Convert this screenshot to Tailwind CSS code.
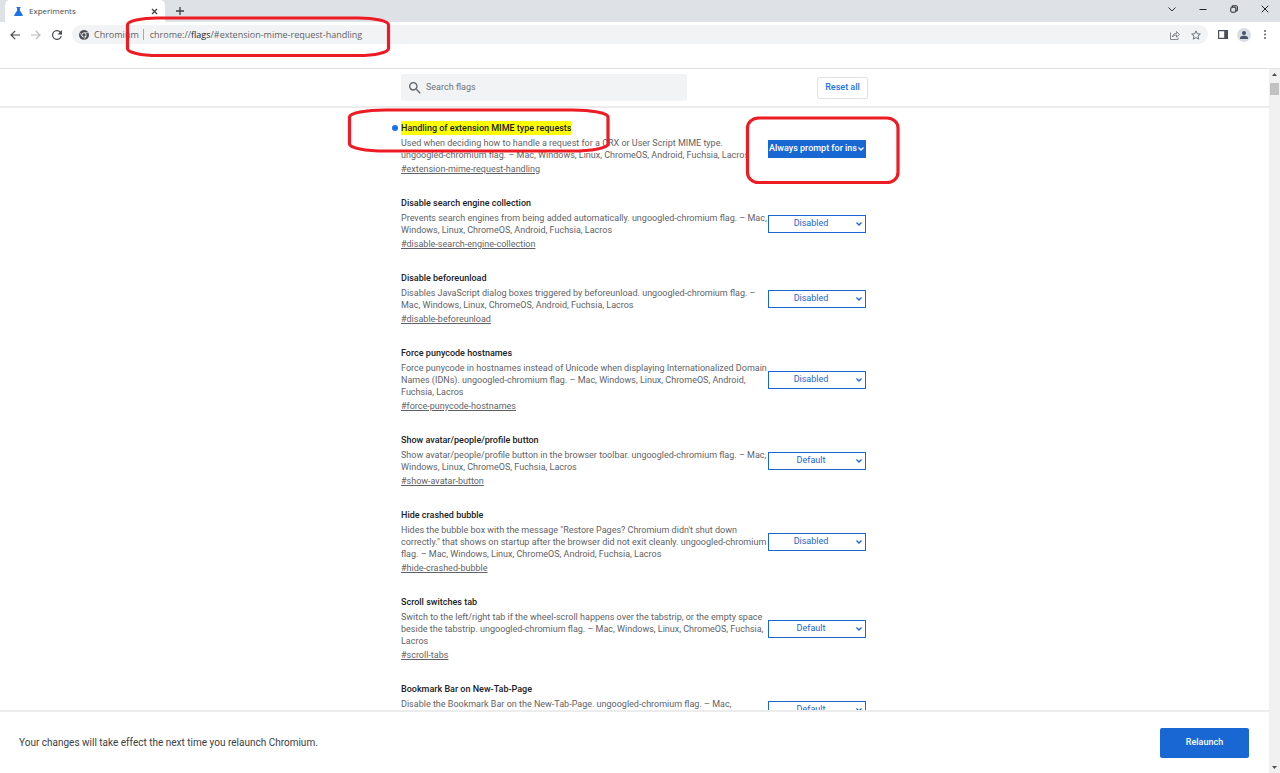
<!DOCTYPE html>
<html lang="en">

<head>
    <meta charset="UTF-8">
    <meta name="viewport" content="width=device-width,initial-scale=1.0">
    <script src="https://cdn.jsdelivr.net/npm/@tailwindcss/browser@4"></script>
    <title>Experiments</title>
</head>

<body class="relative flex flex-col h-screen overflow-hidden bg-white font-['Roboto',sans-serif] text-[9px] text-[#5f6368]">

    <!-- Tab strip -->
    <header class="shrink-0 font-['Open_Sans',sans-serif]">
        <div class="flex items-end justify-between h-[22px] bg-[#dee1e6]">
            <div class="flex items-center h-full pl-[5px]">
                <div class="flex items-center w-40 h-full pl-[9px] pr-[7px] bg-white rounded-t-[5px]">
                    <svg class="w-[9px] h-[9px] shrink-0" viewBox="0 0 18 18" fill="#1a73e8">
                        <path d="M5 0h8v2h-1.200v5L17.500 16c.6 1-.1 2-1.200 2H1.700C.6 18-.1 17 .5 16L6.200 7V2H5z" />
                    </svg>
                    <span class="flex-1 ml-1.5 text-[8px] text-[#45494d]">Experiments</span>
                    <button type="button" aria-label="Close tab">
                        <svg class="w-[7px] h-[7px]" viewBox="0 0 7 7" fill="none" stroke="#3c4043" stroke-width="1.200">
                            <path d="M1 1l5 5M6 1l-5 5" />
                        </svg>
                    </button>
                </div>
                <button type="button" class="ml-[11px]" aria-label="New tab">
                    <svg class="w-2 h-2" viewBox="0 0 8 8" fill="none" stroke="#3c4043" stroke-width="1.300">
                        <path d="M4 0v8M0 4h8" />
                    </svg>
                </button>
            </div>
            <div class="flex items-center gap-[23px] h-[18px] pr-[11px] mb-1">
                <button type="button" aria-label="Search tabs">
                    <svg class="w-2 h-2" viewBox="0 0 8 8" fill="none" stroke="#333" stroke-width="1">
                        <path d="M.5 2.500L4 6l3.500-3.500" />
                    </svg>
                </button>
                <button type="button" aria-label="Minimize">
                    <svg class="w-2 h-2" viewBox="0 0 8 8" fill="none" stroke="#222" stroke-width="1">
                        <path d="M.5 4.500h7" />
                    </svg>
                </button>
                <button type="button" aria-label="Restore">
                    <svg class="w-2 h-2" viewBox="0 0 8 8" fill="none" stroke="#222" stroke-width="1">
                        <rect x=".8" y="2.200" width="5" height="5" rx=".8" />
                        <path d="M2.300 2V.8h4.200q.8 0 .8.8v4.100H6" />
                    </svg>
                </button>
                <button type="button" aria-label="Close">
                    <svg class="w-2 h-2" viewBox="0 0 8 8" fill="none" stroke="#222" stroke-width="1">
                        <path d="M.7.7l6.600 6.600M7.300.7L.7 7.300" />
                    </svg>
                </button>
            </div>
        </div>

        <!-- Toolbar -->
        <div class="flex items-center h-[25px] pl-2.5 pr-[13px]">
            <div class="flex items-center gap-[11px] w-[62px]">
                <button type="button" aria-label="Back">
                    <svg class="w-2.5 h-2.5" viewBox="0 0 10 10" fill="none" stroke="#46494d" stroke-width="1.200">
                        <path d="M10 5H1.200M5.200.8L1 5l4.200 4.200" />
                    </svg>
                </button>
                <button type="button" aria-label="Forward">
                    <svg class="w-2.5 h-2.5" viewBox="0 0 10 10" fill="none" stroke="#babcbe" stroke-width="1.200">
                        <path d="M0 5h8.800M4.800.8L9 5 4.800 9.200" />
                    </svg>
                </button>
                <button type="button" aria-label="Reload">
                    <svg class="w-2.5 h-2.5" viewBox="0 0 16 16" fill="#46494d">
                        <path d="M13.650 2.350A8 8 0 1 0 15.730 10h-2.080A6 6 0 1 1 8 2c1.660 0 3.140.69 4.220 1.780L9 7h7V0z" />
                    </svg>
                </button>
            </div>
            <div class="flex items-center flex-1 h-[19px] pl-[7px] pr-[7px] bg-[#f1f3f4] rounded-full">
                <svg class="w-2.5 h-2.5 shrink-0" viewBox="0 0 24 24" fill="none">
                    <circle cx="12" cy="12" r="12" fill="#4b4f54" />
                    <circle cx="12" cy="12" r="6" fill="#f1f3f4" />
                    <circle cx="12" cy="12" r="4" fill="#4b4f54" />
                    <path d="M12 6.200h10.500M7 15L1.800 6M17 15l-5.200 9" stroke="#f1f3f4" stroke-width="1.500" />
                </svg>
                <span class="ml-[5px]">Chromium</span>
                <span class="w-px h-[11px] ml-1 bg-[#a5a9ad]"></span>
                <span class="flex-1 ml-1.5">chrome://<span class="text-[#202124]">flags</span>/#extension-mime-request-handling</span>
                <button type="button" aria-label="Share">
                    <svg class="w-2.5 h-2.5" viewBox="0 0 20 20" fill="none" stroke="#6b6f73" stroke-width="1.600">
                        <path d="M1 5v14h15v-4M5 14c.5-5 3-7 8-7V3l6 6-6 5v-4c-4 0-6.500 1-8 4z" />
                    </svg>
                </button>
                <button type="button" class="ml-[11px]" aria-label="Bookmark this tab">
                    <svg class="w-2.5 h-2.5" viewBox="0 0 20 20" fill="none" stroke="#5f6368" stroke-width="1.800">
                        <path d="M10 1.800l2.500 5.700 6.200.6-4.700 4.100 1.400 6.100L10 15.100l-5.400 3.200L6 12.200 1.300 8.100l6.200-.6z" />
                    </svg>
                </button>
            </div>
            <button type="button" class="ml-2.5" aria-label="Side panel">
                <svg class="w-2.5 h-[9px]" viewBox="0 0 10 9">
                    <path fill="#4b5058" fill-rule="evenodd" d="M0 0h10v9H0zM1.200 1.200v6.600h5V1.200z" />
                </svg>
            </button>
            <button type="button" class="flex items-center justify-center w-3.5 h-3.5 ml-[9px] bg-[#dadde3] rounded-full" aria-label="Profile">
                <svg class="w-2 h-2" viewBox="0 0 8 8" fill="#46536b">
                    <circle cx="4" cy="2" r="2" />
                    <path d="M0 8V6.800C0 5.300 2.600 4.800 4 4.800s4 .5 4 2V8z" />
                </svg>
            </button>
            <button type="button" class="ml-3" aria-label="Menu">
                <svg class="w-1 h-[9px]" viewBox="0 0 4 9" fill="#5f6368">
                    <circle cx="2" cy="1" r="1" />
                    <circle cx="2" cy="4.500" r="1" />
                    <circle cx="2" cy="8" r="1" />
                </svg>
            </button>
        </div>
        <!-- Empty bookmarks bar -->
        <div class="h-[22px] border-b border-[#dfe1e3]"></div>
    </header>

    <div class="flex flex-1 min-h-0">
        <div class="flex flex-col flex-1 min-w-0">

            <!-- Search -->
            <div class="shrink-0 h-[39px] border-b-2 border-[#ececec]">
                <div class="flex items-center justify-between w-full max-w-[467px] h-full mx-auto">
                    <label for="search" class="flex items-center w-[286px] h-[27px] px-2 bg-[#f1f3f4] rounded-xs">
                        <svg class="w-3 h-3 shrink-0" viewBox="3 3 18 18" fill="#5f6368">
                            <path d="M15.500 14h-.79l-.28-.27A6.471 6.471 0 0 0 16 9.500 6.500 6.500 0 1 0 9.500 16c1.610 0 3.090-.59 4.230-1.570l.27.28v.79l5 4.990L20.490 19l-4.990-5zm-6 0C7.010 14 5 11.990 5 9.500S7.010 5 9.500 5 14 7.010 14 9.500 11.990 14 9.500 14z" />
                        </svg>
                        <input type="text" id="search" placeholder="Search flags" aria-label="Search flags"
                            class="flex-1 ml-[5px] text-[9px] outline-none placeholder:text-[#6f7377]">
                    </label>
                    <button type="button" class="w-[51px] h-[22px] border border-[#dfe1e5] rounded-xs font-medium text-[#1a73e8]">Reset all</button>
                </div>
            </div>

            <!-- Flags -->
            <main class="flex-1 min-h-0 overflow-hidden">
                <div class="w-full max-w-[467px] mx-auto pt-[13px] pr-0.5">

                    <div class="flex items-center mb-5">
                        <div class="flex-1 min-w-0">
                            <h2 class="relative leading-[14px] font-medium text-[#202124]">
                                <span class="absolute -left-[9px] top-1 w-1.5 h-1.5 bg-[#1a73e8] rounded-full"></span>
                                <label for="flag1" class="inline-block bg-[#ffff00]">Handling of extension MIME type requests</label>
                            </h2>
                            <p class="mt-0.5 leading-3 whitespace-nowrap">Used when deciding how to handle a request for a CRX or User Script MIME type.<br>
                                ungoogled-chromium flag. – Mac, Windows, Linux, ChromeOS, Android, Fuchsia, Lacros</p>
                            <a href="#extension-mime-request-handling" class="block mt-0.5 leading-[13px] underline">#extension-mime-request-handling</a>
                        </div>
                        <div class="relative w-[98px] h-[18px]">
                            <select id="flag1" class="block w-full h-full pr-2 appearance-none border border-[#1967d2] bg-[#1967d2] text-[9px] font-medium text-white">
                                <option>Always prompt for install</option>
                            </select>
                            <svg class="absolute right-0.5 top-[7px] w-1.5 h-1" viewBox="0 0 6 4" fill="none" stroke="#fff" stroke-width="1.300">
                                <path d="M.5.5L3 3 5.500.5" />
                            </svg>
                        </div>
                    </div>

                    <div class="flex items-center mb-5">
                        <div class="flex-1 min-w-0">
                            <h2 class="leading-[14px] font-medium text-[#202124]"><label for="flag2">Disable search engine collection</label></h2>
                            <p class="mt-0.5 leading-3 whitespace-nowrap">Prevents search engines from being added automatically. ungoogled-chromium flag. – Mac,<br>
                                Windows, Linux, ChromeOS, Android, Fuchsia, Lacros</p>
                            <a href="#disable-search-engine-collection" class="block mt-0.5 leading-[13px] underline">#disable-search-engine-collection</a>
                        </div>
                        <div class="relative w-[98px] h-[18px]">
                            <select id="flag2" class="block w-full h-full pr-3 appearance-none border border-[#1967d2] bg-white text-center text-[9px] text-[#1967d2]">
                                <option>Disabled</option>
                            </select>
                            <svg class="absolute right-1 top-[7px] w-1.5 h-1" viewBox="0 0 6 4" fill="none" stroke="#1967d2" stroke-width="1.300">
                                <path d="M.5.5L3 3 5.500.5" />
                            </svg>
                        </div>
                    </div>

                    <div class="flex items-center mb-5">
                        <div class="flex-1 min-w-0">
                            <h2 class="leading-[14px] font-medium text-[#202124]"><label for="flag3">Disable beforeunload</label></h2>
                            <p class="mt-0.5 leading-3 whitespace-nowrap">Disables JavaScript dialog boxes triggered by beforeunload. ungoogled-chromium flag. –<br>
                                Mac, Windows, Linux, ChromeOS, Android, Fuchsia, Lacros</p>
                            <a href="#disable-beforeunload" class="block mt-0.5 leading-[13px] underline">#disable-beforeunload</a>
                        </div>
                        <div class="relative w-[98px] h-[18px]">
                            <select id="flag3" class="block w-full h-full pr-3 appearance-none border border-[#1967d2] bg-white text-center text-[9px] text-[#1967d2]">
                                <option>Disabled</option>
                            </select>
                            <svg class="absolute right-1 top-[7px] w-1.5 h-1" viewBox="0 0 6 4" fill="none" stroke="#1967d2" stroke-width="1.300">
                                <path d="M.5.5L3 3 5.500.5" />
                            </svg>
                        </div>
                    </div>

                    <div class="flex items-center mb-5">
                        <div class="flex-1 min-w-0">
                            <h2 class="leading-[14px] font-medium text-[#202124]"><label for="flag4">Force punycode hostnames</label></h2>
                            <p class="mt-0.5 leading-3 whitespace-nowrap">Force punycode in hostnames instead of Unicode when displaying Internationalized Domain<br>
                                Names (IDNs). ungoogled-chromium flag. – Mac, Windows, Linux, ChromeOS, Android,<br>
                                Fuchsia, Lacros</p>
                            <a href="#force-punycode-hostnames" class="block mt-0.5 leading-[13px] underline">#force-punycode-hostnames</a>
                        </div>
                        <div class="relative w-[98px] h-[18px]">
                            <select id="flag4" class="block w-full h-full pr-3 appearance-none border border-[#1967d2] bg-white text-center text-[9px] text-[#1967d2]">
                                <option>Disabled</option>
                            </select>
                            <svg class="absolute right-1 top-[7px] w-1.5 h-1" viewBox="0 0 6 4" fill="none" stroke="#1967d2" stroke-width="1.300">
                                <path d="M.5.5L3 3 5.500.5" />
                            </svg>
                        </div>
                    </div>

                    <div class="flex items-center mb-5">
                        <div class="flex-1 min-w-0">
                            <h2 class="leading-[14px] font-medium text-[#202124]"><label for="flag5">Show avatar/people/profile button</label></h2>
                            <p class="mt-0.5 leading-3 whitespace-nowrap">Show avatar/people/profile button in the browser toolbar. ungoogled-chromium flag. – Mac,<br>
                                Windows, Linux, ChromeOS, Fuchsia, Lacros</p>
                            <a href="#show-avatar-button" class="block mt-0.5 leading-[13px] underline">#show-avatar-button</a>
                        </div>
                        <div class="relative w-[98px] h-[18px]">
                            <select id="flag5" class="block w-full h-full pr-3 appearance-none border border-[#1967d2] bg-white text-center text-[9px] text-[#1967d2]">
                                <option>Default</option>
                            </select>
                            <svg class="absolute right-1 top-[7px] w-1.5 h-1" viewBox="0 0 6 4" fill="none" stroke="#1967d2" stroke-width="1.300">
                                <path d="M.5.5L3 3 5.500.5" />
                            </svg>
                        </div>
                    </div>

                    <div class="flex items-center mb-5">
                        <div class="flex-1 min-w-0">
                            <h2 class="leading-[14px] font-medium text-[#202124]"><label for="flag6">Hide crashed bubble</label></h2>
                            <p class="mt-0.5 leading-3 whitespace-nowrap">Hides the bubble box with the message "Restore Pages? Chromium didn't shut down<br>
                                correctly." that shows on startup after the browser did not exit cleanly. ungoogled-chromium<br>
                                flag. – Mac, Windows, Linux, ChromeOS, Android, Fuchsia, Lacros</p>
                            <a href="#hide-crashed-bubble" class="block mt-0.5 leading-[13px] underline">#hide-crashed-bubble</a>
                        </div>
                        <div class="relative w-[98px] h-[18px]">
                            <select id="flag6" class="block w-full h-full pr-3 appearance-none border border-[#1967d2] bg-white text-center text-[9px] text-[#1967d2]">
                                <option>Disabled</option>
                            </select>
                            <svg class="absolute right-1 top-[7px] w-1.5 h-1" viewBox="0 0 6 4" fill="none" stroke="#1967d2" stroke-width="1.300">
                                <path d="M.5.5L3 3 5.500.5" />
                            </svg>
                        </div>
                    </div>

                    <div class="flex items-center mb-5">
                        <div class="flex-1 min-w-0">
                            <h2 class="leading-[14px] font-medium text-[#202124]"><label for="flag7">Scroll switches tab</label></h2>
                            <p class="mt-0.5 leading-3 whitespace-nowrap">Switch to the left/right tab if the wheel-scroll happens over the tabstrip, or the empty space<br>
                                beside the tabstrip. ungoogled-chromium flag. – Mac, Windows, Linux, ChromeOS, Fuchsia,<br>
                                Lacros</p>
                            <a href="#scroll-tabs" class="block mt-0.5 leading-[13px] underline">#scroll-tabs</a>
                        </div>
                        <div class="relative w-[98px] h-[18px]">
                            <select id="flag7" class="block w-full h-full pr-3 appearance-none border border-[#1967d2] bg-white text-center text-[9px] text-[#1967d2]">
                                <option>Default</option>
                            </select>
                            <svg class="absolute right-1 top-[7px] w-1.5 h-1" viewBox="0 0 6 4" fill="none" stroke="#1967d2" stroke-width="1.300">
                                <path d="M.5.5L3 3 5.500.5" />
                            </svg>
                        </div>
                    </div>

                    <div class="flex items-center mb-5">
                        <div class="flex-1 min-w-0">
                            <h2 class="leading-[14px] font-medium text-[#202124]"><label for="flag8">Bookmark Bar on New-Tab-Page</label></h2>
                            <p class="mt-0.5 leading-3 whitespace-nowrap">Disable the Bookmark Bar on the New-Tab-Page. ungoogled-chromium flag. – Mac,<br>
                                Windows, Linux, ChromeOS, Fuchsia, Lacros</p>
                            <a href="#bookmark-bar-ntp" class="block mt-0.5 leading-[13px] underline">#bookmark-bar-ntp</a>
                        </div>
                        <div class="relative w-[98px] h-[18px]">
                            <select id="flag8" class="block w-full h-full pr-3 appearance-none border border-[#1967d2] bg-white text-center text-[9px] text-[#1967d2]">
                                <option>Default</option>
                            </select>
                            <svg class="absolute right-1 top-[7px] w-1.5 h-1" viewBox="0 0 6 4" fill="none" stroke="#1967d2" stroke-width="1.300">
                                <path d="M.5.5L3 3 5.500.5" />
                            </svg>
                        </div>
                    </div>

                </div>
            </main>

            <!-- Restart bar -->
            <footer class="flex items-center justify-between shrink-0 h-[63px] pl-[19px] pr-5 border-t-2 border-[#ececec]">
                <p class="text-[10px] text-[#3c4043]">Your changes will take effect the next time you relaunch Chromium.</p>
                <button type="button" class="w-[89px] h-[30px] bg-[#1967d2] rounded-xs font-medium text-white">Relaunch</button>
            </footer>
        </div>

        <!-- Scrollbar -->
        <div class="flex flex-col items-center justify-between shrink-0 w-[11px] py-1 bg-[#f1f1f1]">
            <div class="flex flex-col items-center gap-[7px]">
                <svg class="w-[5px] h-[3px]" viewBox="0 0 5 3" fill="#505050">
                    <path d="M0 3L2.500 0 5 3z" />
                </svg>
                <div class="w-[9px] h-3 bg-[#c1c1c1]"></div>
            </div>
            <svg class="w-[5px] h-[3px]" viewBox="0 0 5 3" fill="#505050">
                <path d="M0 0l2.500 3L5 0z" />
            </svg>
        </div>
    </div>

    <!-- Red markers over the page -->
    <svg class="absolute left-0 top-0 w-[1280px] h-[773px] pointer-events-none" viewBox="0 0 1280 773" fill="none" stroke="#ed1c24" stroke-width="3.200">
        <rect x="127.500" y="18" width="261" height="37.500" rx="30" ry="7" />
        <rect x="349.500" y="110" width="258.500" height="41" rx="36" ry="7" />
        <rect x="747.500" y="118" width="150.500" height="64.500" rx="11" ry="10" />
    </svg>
</body>

</html>
